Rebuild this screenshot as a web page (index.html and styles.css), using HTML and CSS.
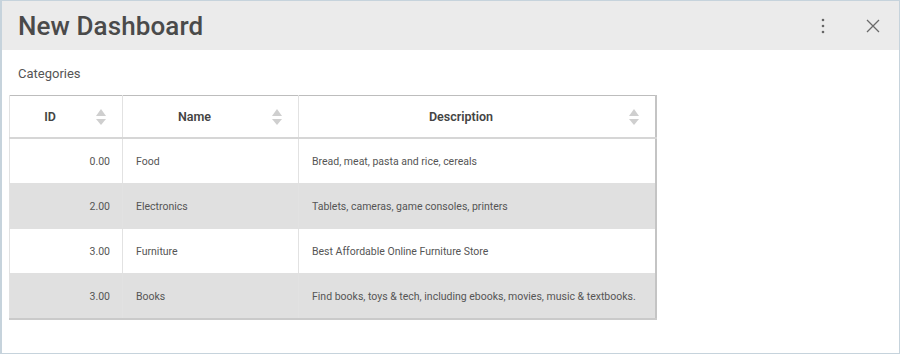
FILE: index.html
```html
<!DOCTYPE html>
<html lang="en">

<head>
  <meta charset="UTF-8" />
  <title>New Dashboard</title>
  <link rel="stylesheet" href="styles.css">
</head>

<body>
  <div class="window">
    <div class="topbar">
      <h1>New Dashboard</h1>
      <div class="actions">
        <!-- more menu -->
        <svg class="icon" width="12" height="20" viewBox="0 0 12 20">
          <circle cx="6" cy="4" r="1.3" />
          <circle cx="6" cy="10" r="1.3" />
          <circle cx="6" cy="16" r="1.3" />
        </svg>
        <!-- close -->
        <svg class="icon close" width="14" height="14" viewBox="0 0 14 14">
          <path d="M1 1 L13 13 M13 1 L1 13" />
        </svg>
      </div>
    </div>

    <div class="content">
      <div class="widget-title">Categories</div>

      <table class="grid">
        <thead>
          <tr>
            <th class="col-id"><div class="th-inner"><span>ID</span><i class="sort"></i></div></th>
            <th class="col-name"><div class="th-inner"><span>Name</span><i class="sort"></i></div></th>
            <th class="col-desc"><div class="th-inner"><span>Description</span><i class="sort"></i></div></th>
          </tr>
        </thead>
        <tbody>
          <tr>
            <td class="num">0.00</td>
            <td>Food</td>
            <td>Bread, meat, pasta and rice, cereals</td>
          </tr>
          <tr>
            <td class="num">2.00</td>
            <td>Electronics</td>
            <td>Tablets, cameras, game consoles, printers</td>
          </tr>
          <tr>
            <td class="num">3.00</td>
            <td>Furniture</td>
            <td>Best Affordable Online Furniture Store</td>
          </tr>
          <tr>
            <td class="num">3.00</td>
            <td>Books</td>
            <td>Find books, toys &amp; tech, including ebooks, movies, music &amp; textbooks.</td>
          </tr>
        </tbody>
      </table>
    </div>
  </div>
</body>

</html>
```

FILE: styles.css
```css
html,
body {
  margin: 0;
  padding: 0;
  background: #fff;
  font-family: Roboto, "Liberation Sans", Arial, sans-serif;
}

.window {
  box-sizing: border-box;
  width: 900px;
  height: 354px;
  border: 1px solid #c6d3dc;
  border-left-width: 2px;
  background: #fff;
}

.topbar {
  display: flex;
  align-items: center;
  justify-content: space-between;
  height: 49px;
  background: #ebebeb;
  padding: 0 19px 0 16px;
}

h1 {
  margin: 0;
  font-size: 26px;
  font-weight: 500;
  color: #4a4a4a;
  letter-spacing: 0.1px;
}

.actions {
  display: flex;
  align-items: center;
  gap: 37px;
}

.icon {
  fill: #666;
  display: block;
}

.icon.close {
  fill: none;
  stroke: #6a6a6a;
  stroke-width: 1.3;
}

.content {
  padding: 0 7px;
}

.widget-title {
  padding: 16px 9px 0;
  height: 29px;
  font-size: 13px;
  color: #555;
}

/* table */
.grid {
  border-collapse: collapse;
  table-layout: fixed;
  width: 648px;
  border: 1px solid #bdbdbd;
  border-right: 2px solid #c4c4c4;
  border-bottom: 2px solid #cacaca;
  font-size: 10.5px;
  color: #555;
}

.col-id {
  width: 112px;
}

.col-name {
  width: 175px;
}

.grid th {
  height: 41px;
  padding: 0;
  border-left: 1px solid #e2e2e2;
  border-bottom: 2px solid #d6d6d6;
  font-size: 12.5px;
  font-weight: 600;
  color: #444;
}

.th-inner {
  display: flex;
  align-items: center;
  padding: 0 16px 0 6px;
}

.th-inner span {
  flex: 1;
  text-align: center;
}

.sort {
  width: 10px;
  height: 16px;
  margin-left: 12px;
  position: relative;
}

.sort::before,
.sort::after {
  content: "";
  position: absolute;
  left: 0;
  border-left: 5px solid transparent;
  border-right: 5px solid transparent;
}

.sort::before {
  top: 0;
  border-bottom: 7px solid #cfcfcf;
}

.sort::after {
  bottom: 0;
  border-top: 6px solid #cfcfcf;
}

.grid td {
  height: 44px;
  padding: 0 13px;
  border-left: 1px solid #e2e2e2;
  border-bottom: 1px solid #e0e0e0;
  white-space: nowrap;
}

.grid td.num {
  text-align: right;
  padding-right: 12px;
}

.grid tbody tr:nth-child(even) td {
  background: #e0e0e0;
}

.grid tbody tr:last-child td {
  border-bottom: 0;
}
```
